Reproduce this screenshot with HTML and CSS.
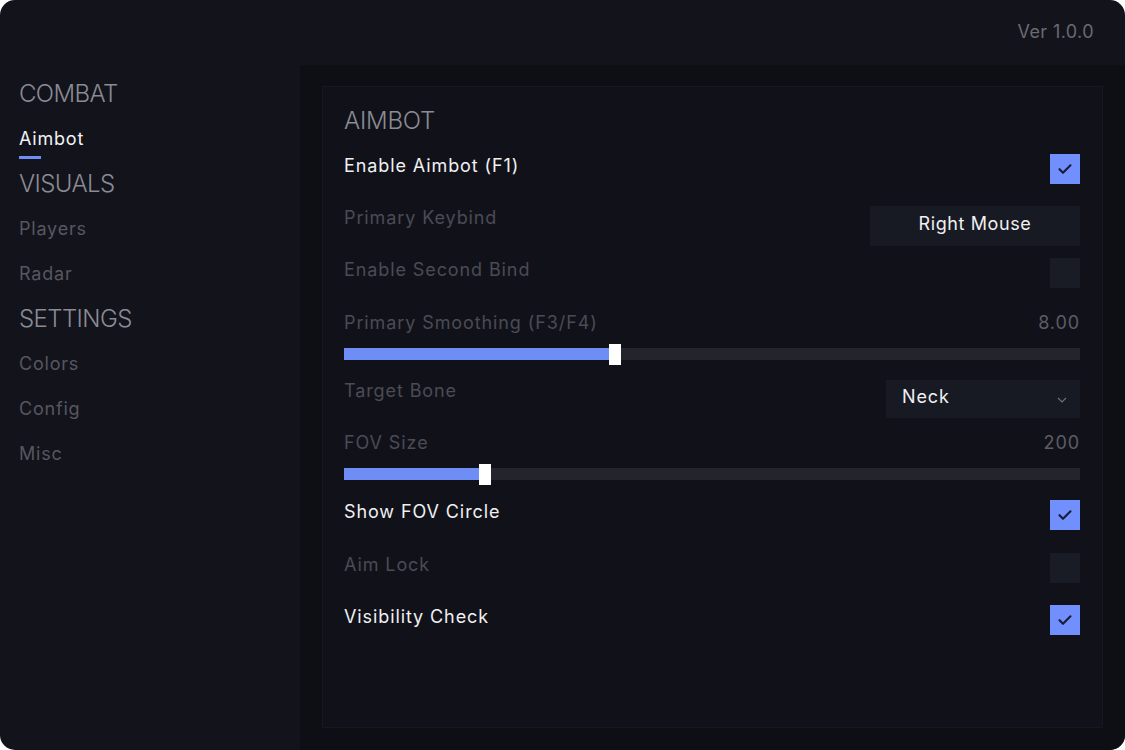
FILE: index.html
```html
<!DOCTYPE html>
<html lang="en">
<head>
<meta charset="utf-8">
<title>Menu</title>
<link rel="stylesheet" href="styles.css">
</head>
<body>
<div class="window">
  <header class="topbar">
    <span class="version">Ver 1.0.0</span>
  </header>
  <div class="main">
    <nav class="sidebar">
      <div class="nav-head">COMBAT</div>
      <div class="nav-item active">Aimbot</div>
      <div class="nav-head">VISUALS</div>
      <div class="nav-item">Players</div>
      <div class="nav-item">Radar</div>
      <div class="nav-head">SETTINGS</div>
      <div class="nav-item">Colors</div>
      <div class="nav-item">Config</div>
      <div class="nav-item">Misc</div>
    </nav>
    <section class="content">
      <div class="panel">
        <h2 class="panel-title">AIMBOT</h2>
        <div class="rows">
          <div class="row">
            <span class="label on">Enable Aimbot (F1)</span>
            <span class="check checked"><svg viewBox="0 0 30 30" width="30" height="30"><path d="M9.5 15.2 L13 18.8 L20.5 11.3" fill="none" stroke="#1a1e3c" stroke-width="2.2" stroke-linecap="round" stroke-linejoin="round"/></svg></span>
          </div>
          <div class="row">
            <span class="label">Primary Keybind</span>
            <span class="keybind">Right Mouse</span>
          </div>
          <div class="row row-b">
            <span class="label">Enable Second Bind</span>
            <span class="check"></span>
          </div>
          <div class="slider-row">
            <div class="slider-head">
              <span class="label">Primary Smoothing (F3/F4)</span>
              <span class="value">8.00</span>
            </div>
            <div class="track">
              <div class="fill" style="width: 36.8%"><span class="thumb"></span></div>
            </div>
          </div>
          <div class="select-row">
            <span class="label">Target Bone</span>
            <span class="select">Neck<svg class="chev" viewBox="0 0 10 6" width="10" height="6"><path d="M1 1 L5 5 L9 1" fill="none" stroke="#70717a" stroke-width="1.1"/></svg></span>
          </div>
          <div class="slider-row">
            <div class="slider-head">
              <span class="label">FOV Size</span>
              <span class="value">200</span>
            </div>
            <div class="track">
              <div class="fill" style="width: 19.2%"><span class="thumb"></span></div>
            </div>
          </div>
          <div class="row row-b">
            <span class="label on">Show FOV Circle</span>
            <span class="check checked"><svg viewBox="0 0 30 30" width="30" height="30"><path d="M9.5 15.2 L13 18.8 L20.5 11.3" fill="none" stroke="#1a1e3c" stroke-width="2.2" stroke-linecap="round" stroke-linejoin="round"/></svg></span>
          </div>
          <div class="row">
            <span class="label">Aim Lock</span>
            <span class="check"></span>
          </div>
          <div class="row">
            <span class="label on">Visibility Check</span>
            <span class="check checked"><svg viewBox="0 0 30 30" width="30" height="30"><path d="M9.5 15.2 L13 18.8 L20.5 11.3" fill="none" stroke="#1a1e3c" stroke-width="2.2" stroke-linecap="round" stroke-linejoin="round"/></svg></span>
          </div>
        </div>
      </div>
    </section>
  </div>
</div>
</body>
</html>
```

FILE: styles.css
```css
* { box-sizing: border-box; }

html, body {
  margin: 0;
  padding: 0;
  background: #ffffff;
}

body {
  width: 1125px;
  height: 750px;
  overflow: hidden;
  font-family: Inter, "Noto Sans", "DejaVu Sans", sans-serif;
  letter-spacing: 0.9px;
}

.window {
  width: 1125px;
  height: 750px;
  border-radius: 15px;
  overflow: hidden;
  background: #13131c;
  display: flex;
  flex-direction: column;
}

.topbar {
  height: 65px;
  flex: none;
  display: flex;
  align-items: center;
  justify-content: flex-end;
  padding: 0 31px 3px 0;
}

.version {
  font-size: 18px;
  color: #696a72;
  font-weight: 400;
  letter-spacing: 0.4px;
}

.main {
  flex: 1;
  display: flex;
  min-height: 0;
}

.sidebar {
  width: 300px;
  flex: none;
  padding: 6px 0 0 19px;
  display: flex;
  flex-direction: column;
}

.nav-head,
.nav-item {
  height: 45px;
  display: flex;
  align-items: center;
}

.nav-head {
  font-size: 24px;
  font-weight: 300;
  color: #8a8b94;
  letter-spacing: -0.6px;
}

.nav-item {
  font-size: 18px;
  color: #56575f;
  position: relative;
  letter-spacing: 0.8px;
}

.nav-item.active {
  color: #f2f2f4;
}

.nav-item.active::after {
  content: "";
  position: absolute;
  left: 0;
  bottom: 2px;
  width: 22px;
  height: 3px;
  background: #6f8ef4;
}

.content {
  flex: 1;
  background: #0e0f14;
  padding: 21px 22px 22px 22px;
  display: flex;
}

.panel {
  flex: 1;
  background: #111219;
  border: 1px solid #17181f;
  padding: 20px 22px 0 21px;
  display: flex;
  flex-direction: column;
}

.panel-title {
  margin: 0;
  height: 28px;
  line-height: 28px;
  font-size: 24px;
  font-weight: 300;
  color: #8a8b94;
  letter-spacing: -0.2px;
}

.rows {
  margin-top: 19px;
  display: flex;
  flex-direction: column;
}

.row {
  height: 52px;
  display: flex;
  justify-content: space-between;
  align-items: flex-start;
}

.row-b { height: 53px; }

.select-row {
  height: 51px;
  display: flex;
  justify-content: space-between;
  align-items: flex-start;
}

.label {
  font-size: 18px;
  line-height: 22px;
  color: #4a4b55;
  padding-top: 1px;
}

.label.on {
  color: #f0f0f2;
}

.select-row .label { padding-top: 0; }

.check {
  width: 30px;
  height: 30px;
  background: #1a1c25;
  display: block;
  flex: none;
}

.check svg { display: block; }

.check.checked {
  background: #7190fd;
}

.keybind {
  width: 210px;
  height: 40px;
  background: #181a23;
  color: #f0f0f2;
  font-size: 18px;
  display: flex;
  align-items: center;
  justify-content: center;
  padding-bottom: 5px;
  letter-spacing: 0.6px;
}

.select {
  width: 194px;
  height: 38px;
  background: #181a23;
  color: #f0f0f2;
  font-size: 18px;
  display: flex;
  align-items: center;
  justify-content: space-between;
  padding: 0 13px 5px 16px;
}

.chev { display: block; margin-top: 6px; }

.slider-row {
  height: 69px;
  display: flex;
  flex-direction: column;
}

.slider-head {
  height: 22px;
  display: flex;
  justify-content: space-between;
  align-items: center;
  padding-top: 1px;
}

.slider-head .label { padding-top: 0; }

.value {
  font-size: 18px;
  color: #5c5d65;
}

.track {
  margin-top: 15px;
  height: 12px;
  background: #24252c;
  display: flex;
}

.fill {
  height: 12px;
  background: #6e8ef5;
  display: flex;
  justify-content: flex-end;
  align-items: center;
}

.thumb {
  width: 12px;
  height: 21px;
  background: #ffffff;
  margin-right: -6px;
  flex: none;
}
```
